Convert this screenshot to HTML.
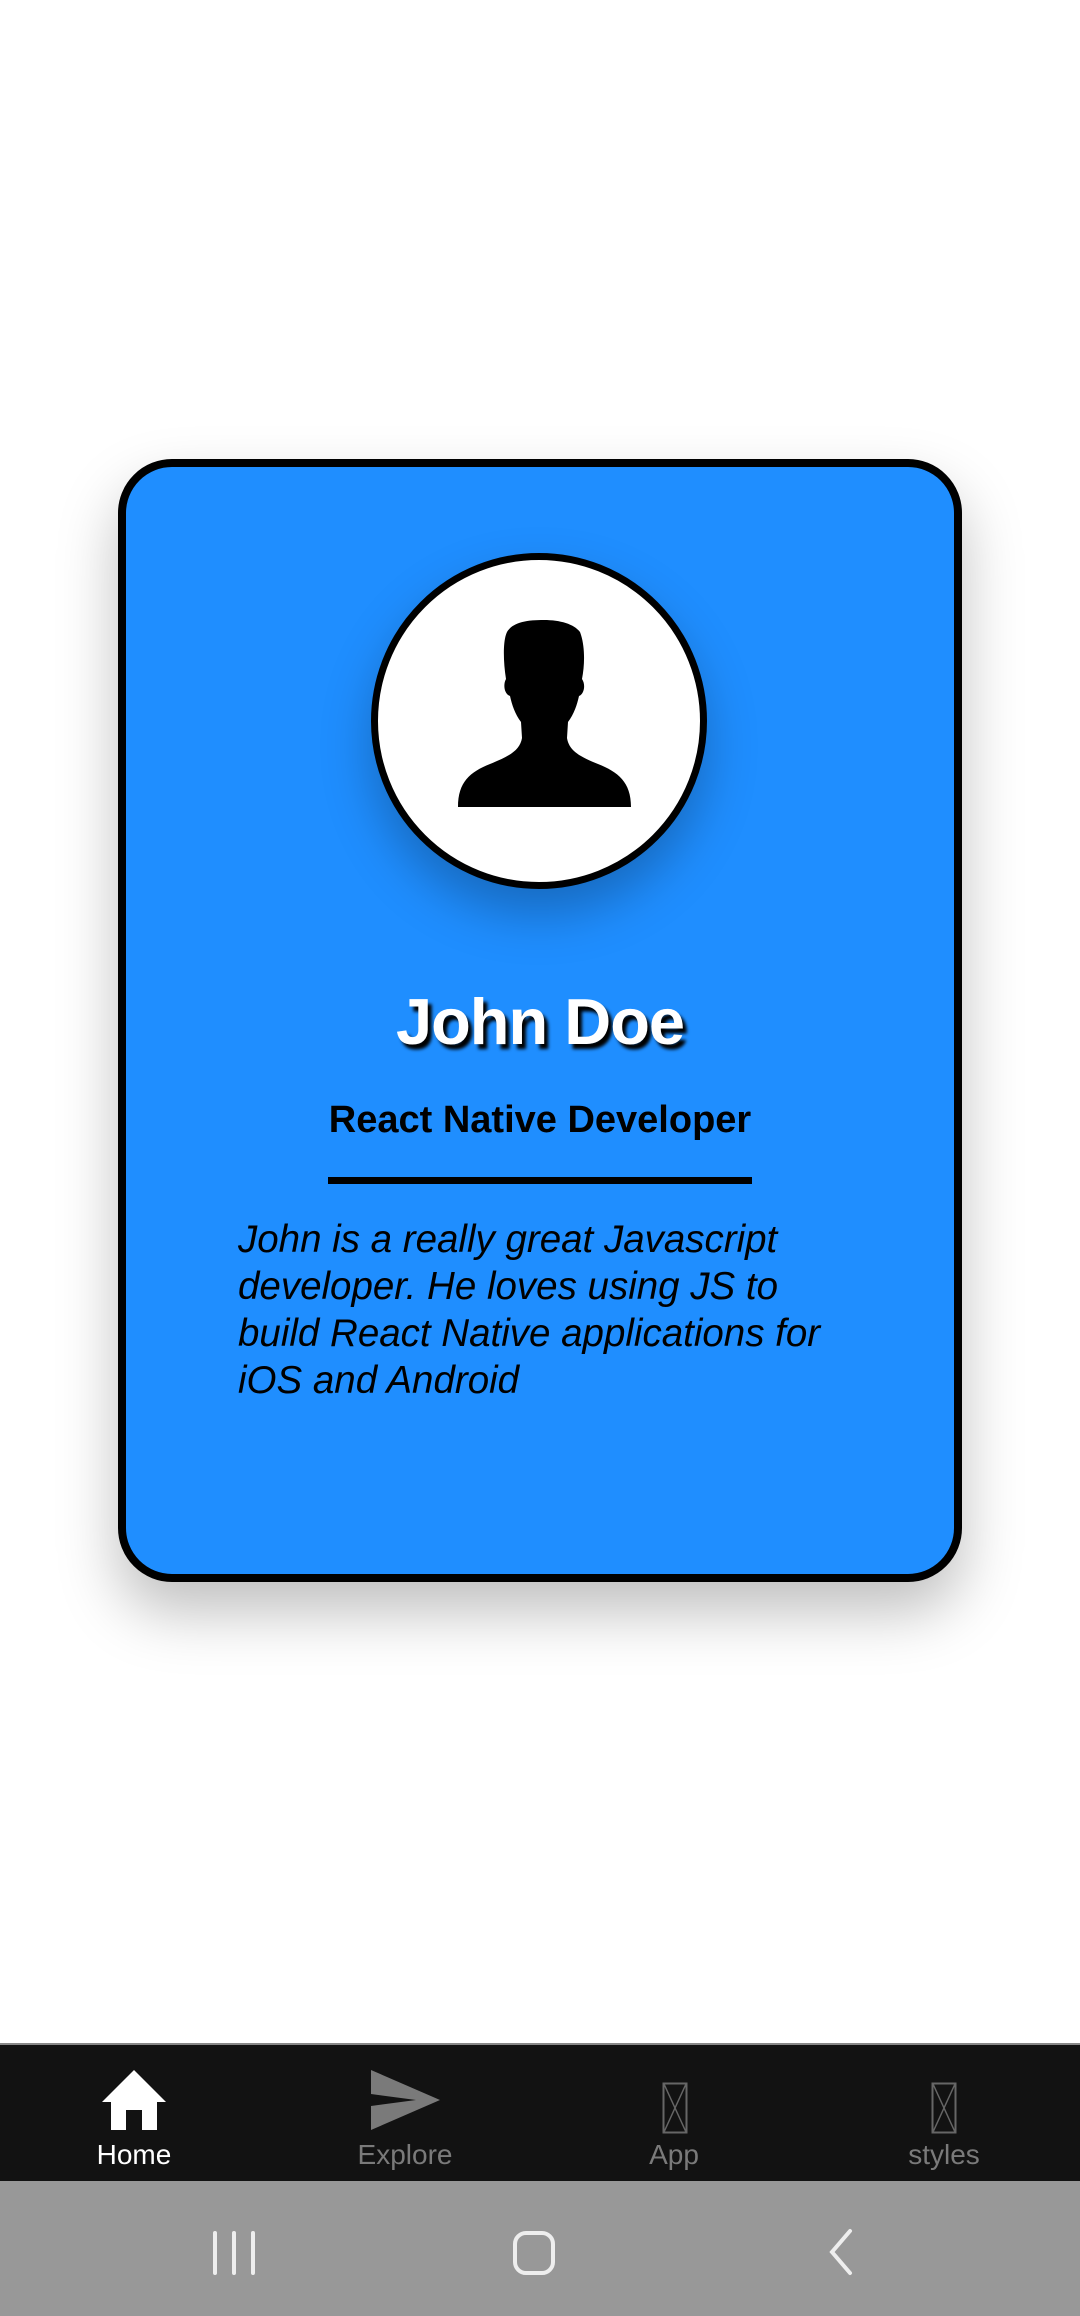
<!DOCTYPE html>
<html><head><meta charset="utf-8"><style>
body{margin:0;width:1080px;height:2316px;background:#fff;position:relative;overflow:hidden;font-family:"Liberation Sans",Roboto,sans-serif}
.card{position:absolute;left:118px;top:459px;width:828px;height:1107px;background:#1f8eff;border:8px solid #000;border-radius:54px;box-shadow:0 30px 60px rgba(0,0,0,0.25)}
.circ{position:absolute;left:371px;top:553px;width:322px;height:322px;border:7px solid #000;border-radius:50%;background:#fff;box-shadow:0 25px 50px rgba(0,0,0,0.25)}
.name{position:absolute;left:0;width:1080px;top:984px;text-align:center;color:#fff;font-weight:bold;font-size:65px;text-shadow:4px 5px 3px #000;letter-spacing:-1px}
.role{position:absolute;left:0;width:1080px;top:1099px;text-align:center;font-weight:bold;font-size:38px;color:#000}
.line{position:absolute;left:328px;width:424px;top:1177px;height:7px;background:#000}
.para{position:absolute;left:238px;top:1216px;width:600px;font-style:italic;font-size:38.5px;line-height:47px;color:#000}
.nav{position:absolute;left:0;top:2043px;width:1080px;height:137px;background:#121212;border-top:2px solid #888}
.sys{position:absolute;left:0;top:2181px;width:1080px;height:135px;background:#989898}
.lab{position:absolute;top:2139px;width:200px;text-align:center;font-size:28px;color:#7a7a7a}
</style></head><body>
<div class="card"></div>
<div class="circ"></div>
<svg style="position:absolute;left:0;top:0" width="1080" height="900">
<path d="M458 807 C458 782 470 772 490 764 C510 756 520 750 522 738 L521 722 C515 714 512 705 510 696 C504 694 503 684 506 679 C503 660 503 640 507 632 C513 622 527 620 544 620 C560 620 574 624 580 632 C585 645 585 664 582 679 C586 685 584 694 579 696 C577 705 574 714 568 722 L567 738 C569 750 578 756 598 764 C618 772 631 782 631 807 Z" fill="#000"/>
</svg>
<div class="name">John Doe</div>
<div class="role">React Native Developer</div>
<div class="line"></div>
<div class="para">John is a really great Javascript developer. He loves using JS to build React Native applications for iOS and Android</div>
<div class="nav"></div>
<svg style="position:absolute;left:100px;top:2068px" width="70" height="64" viewBox="0 0 70 64"><path d="M34 2 L2 34 L11 34 L11 62 L26 62 L26 42 L42 42 L42 62 L57 62 L57 34 L66 34 Z" fill="#fff"/></svg>
<svg style="position:absolute;left:368px;top:2069px" width="74" height="62" viewBox="0 0 74 62"><path d="M3 1 L72 31 L3 61 L3 37 L48 31 L3 25 Z" fill="#7a7a7a"/></svg>
<svg style="position:absolute;left:662px;top:2082px" width="26" height="52" viewBox="0 0 26 52"><rect x="1.5" y="1.5" width="23" height="49" fill="none" stroke="#666" stroke-width="2"/><path d="M2 2 L24 50 M24 2 L2 50" stroke="#666" stroke-width="1.5"/></svg>
<svg style="position:absolute;left:931px;top:2082px" width="26" height="52" viewBox="0 0 26 52"><rect x="1.5" y="1.5" width="23" height="49" fill="none" stroke="#666" stroke-width="2"/><path d="M2 2 L24 50 M24 2 L2 50" stroke="#666" stroke-width="1.5"/></svg>
<div class="lab" style="left:34px;color:#fff">Home</div>
<div class="lab" style="left:305px">Explore</div>
<div class="lab" style="left:574px">App</div>
<div class="lab" style="left:844px">styles</div>
<div class="sys"></div>
<svg style="position:absolute;left:210px;top:2230px" width="50" height="46"><path d="M5 3 V43 M24 3 V43 M43 3 V43" stroke="#eee" stroke-width="4" stroke-linecap="round"/></svg>
<svg style="position:absolute;left:510px;top:2230px" width="50" height="46"><rect x="5" y="3" width="38" height="40" rx="11" fill="none" stroke="#eee" stroke-width="4"/></svg>
<svg style="position:absolute;left:820px;top:2228px" width="40" height="50"><path d="M30 3 L12 24 L30 45" fill="none" stroke="#eee" stroke-width="4" stroke-linecap="round"/></svg>
</body></html>
